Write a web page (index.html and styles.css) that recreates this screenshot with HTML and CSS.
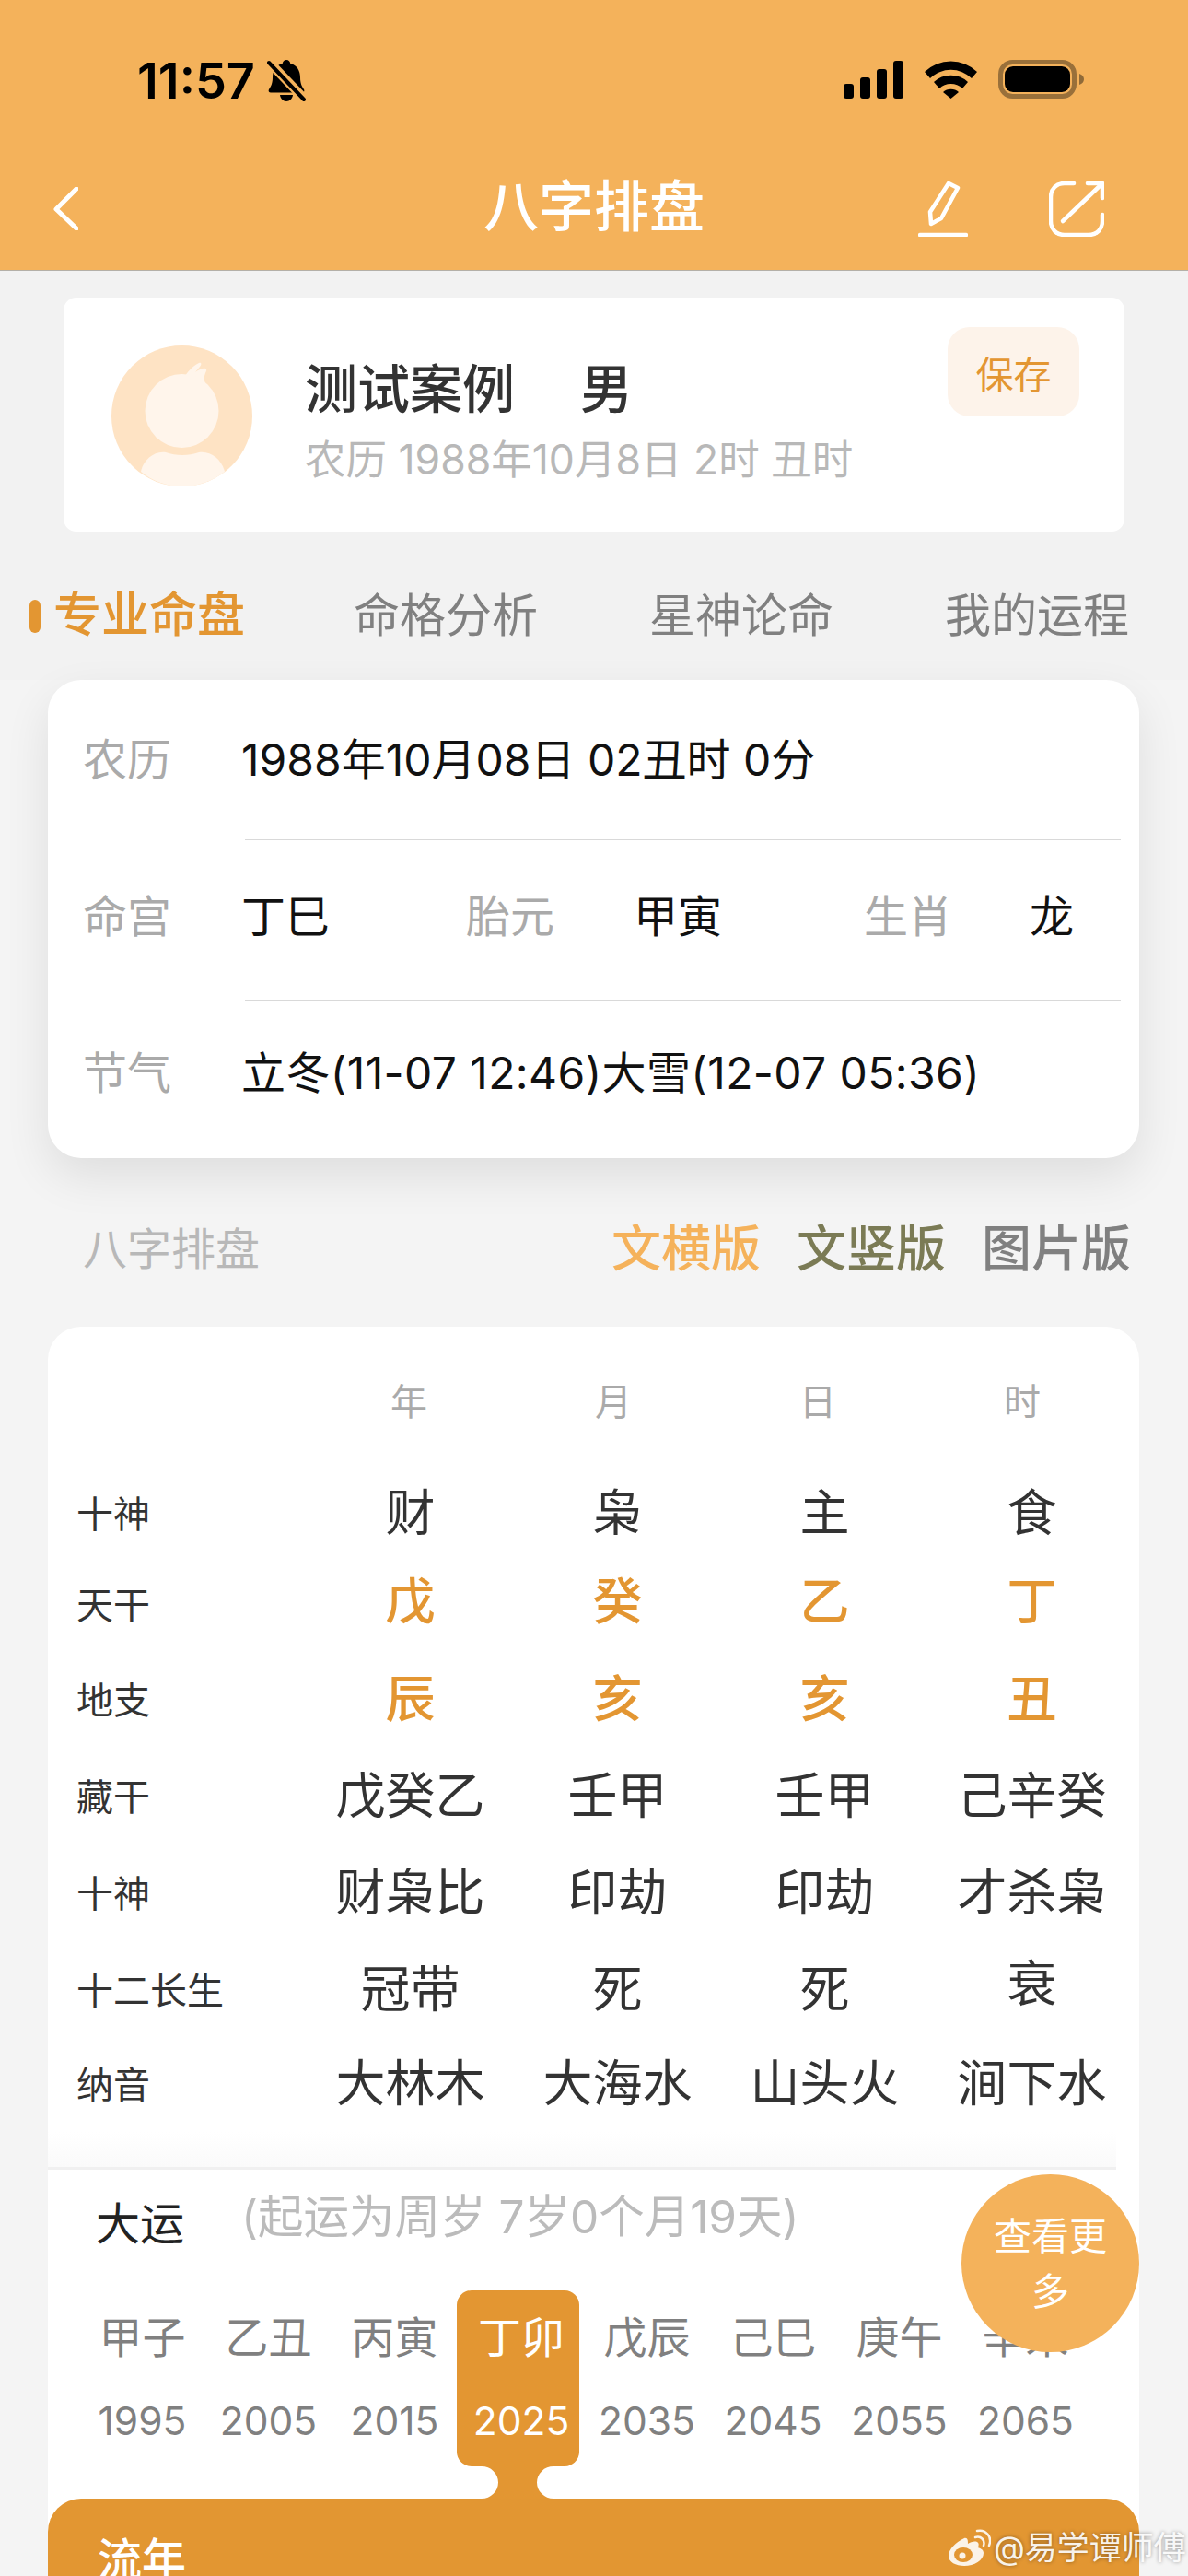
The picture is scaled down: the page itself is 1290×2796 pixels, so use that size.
FILE: index.html
```html
<!DOCTYPE html>
<html lang="zh">
<head>
<meta charset="utf-8">
<title>八字排盘</title>
<link rel="stylesheet" href="styles.css">
</head>
<body>
<div class="page">
  <header class="header">
    <div class="status">
      <div class="status-left">
        <span class="time">11:57</span>
        <svg class="bell" viewBox="0 0 42 45"><path d="M21 0c2.500 0 4 1.700 4.300 4 7 1.700 10.700 7.500 10.700 15 0 6 1.500 9.500 4 13 1 1.700 0 3.500-2 3.500H4c-2 0-3-1.800-2-3.500 2.500-3.500 4-7 4-13 0-7.500 3.500-13.300 10.700-15C17 1.700 18.500 0 21 0z"/><path d="M14 38h14c-.5 4-3.500 7-7 7s-6.500-3-7-7z"/><path class="bell-cut" d="M0 0l42 44"/><path class="bell-line" d="M2 3l38 40"/></svg>
      </div>
      <div class="status-right">
        <svg class="signal" viewBox="0 0 65 41"><rect x="0" y="25" width="11" height="16" rx="3"/><rect x="18" y="18" width="11" height="23" rx="3"/><rect x="36" y="9" width="11" height="32" rx="3"/><rect x="54" y="0" width="11" height="41" rx="3"/></svg>
        <svg class="wifi" viewBox="0 0 57 42"><path d="M0 13A41 41 0 0 1 57 13L51 20A32 32 0 0 0 6 20Z"/><path d="M10 24A27 27 0 0 1 47 24L41 31A18 18 0 0 0 16 31Z"/><path d="M20 35A13 13 0 0 1 37 35L28.500 42Z"/></svg>
        <svg class="battery" viewBox="0 0 93 42"><rect class="batt-shell" x="2.500" y="2.500" width="80" height="37" rx="13"/><rect x="7" y="7" width="71" height="28" rx="9"/><path class="batt-cap" d="M88 15c3 1 5 3 5 6s-2 5-5 6z"/></svg>
      </div>
    </div>
    <div class="nav">
      <svg class="back" viewBox="0 0 27 47"><path d="M25 2L3 24l22 21"/></svg>
      <h1 class="title">八字排盘</h1>
      <svg class="pencil" viewBox="0 0 54 60"><path d="M33 2l10 5-18 33-11 6-1-13z"/><path d="M2 58h50"/></svg>
      <svg class="share" viewBox="0 0 60 60"><path d="M27 2H17C8 2 2 8 2 17v26c0 9 6 15 15 15h26c9 0 15-6 15-15v-7"/><path d="M15 43L56 4"/><path d="M42 2h16v16"/></svg>
    </div>
  </header>

  <section class="top">
    <div class="profile">
      <svg class="avatar" viewBox="0 0 153 153">
        <circle class="av-bg" cx="76.500" cy="76.500" r="76.500"/>
        <path class="av-fg" d="M80 33C84 27 90 21 95 19C98 18 98 21 96 23L91 29C95 26 100 24 102 25C104 26 103 28 102 30C100 34 101 38 102 42Z"/>
        <circle class="av-fg" cx="76.500" cy="71" r="40"/>
        <path class="av-fg" d="M32 137c2-12 14-23 27-21 11 4 25 4 36 0 13-2 25 8 28 21-13 10-29 16-46 16s-33-6-45-16z"/>
      </svg>
      <div class="person">
        <div class="name"><span>测试案例</span><span class="sex">男</span></div>
        <div class="lunar">农历 1988年10月8日 2时 丑时</div>
      </div>
      <button class="save">保存</button>
    </div>
    <nav class="tabs">
      <span class="tab tab-on">专业命盘</span>
      <span class="tab">命格分析</span>
      <span class="tab">星神论命</span>
      <span class="tab">我的运程</span>
    </nav>
  </section>

  <section class="lower">
    <div class="info">
      <div class="info-row r1">
        <span class="info-label">农历</span>
        <span class="info-val">1988年10月08日 02丑时 0分</span>
      </div>
      <div class="info-row r2">
        <span class="info-label">命宫</span>
        <span class="info-val w1">丁巳</span>
        <span class="info-label w2">胎元</span>
        <span class="info-val w3">甲寅</span>
        <span class="info-label w4">生肖</span>
        <span class="info-val">龙</span>
      </div>
      <div class="info-row r3">
        <span class="info-label">节气</span>
        <span class="info-val solar">立冬(11-07 12:46)大雪(12-07 05:36)</span>
      </div>
    </div>

    <div class="section-head">
      <span class="section-title">八字排盘</span>
      <div class="modes">
        <span class="mode m1">文横版</span>
        <span class="mode m2">文竖版</span>
        <span class="mode m3">图片版</span>
      </div>
    </div>

    <div class="chart">
      <div class="pillars">
        <span>年</span><span>月</span><span>日</span><span>时</span>
      </div>
      <div class="grid">
        <span class="lab">十神</span><span>财</span><span>枭</span><span>主</span><span>食</span>
        <span class="lab">天干</span><span class="hi up">戊</span><span class="hi up">癸</span><span class="hi up">乙</span><span class="hi up">丁</span>
        <span class="lab">地支</span><span class="hi">辰</span><span class="hi">亥</span><span class="hi">亥</span><span class="hi">丑</span>
        <span class="lab">藏干</span><span>戊癸乙</span><span>壬甲</span><span>壬甲</span><span>己辛癸</span>
        <span class="lab">十神</span><span>财枭比</span><span>印劫</span><span>印劫</span><span>才杀枭</span>
        <span class="lab">十二长生</span><span>冠带</span><span>死</span><span>死</span><span class="up2">衰</span>
        <span class="lab">纳音</span><span>大林木</span><span>大海水</span><span>山头火</span><span>涧下水</span>
      </div>
      <div class="rule"></div>

      <div class="dayun">
        <div class="dayun-head">
          <span class="dayun-title">大运</span>
          <span class="dayun-note">(起运为周岁 7岁0个月19天)</span>
        </div>
        <div class="dayun-list">
          <div class="yun"><span class="gz">甲子</span><span class="yr">1995</span></div>
          <div class="yun"><span class="gz">乙丑</span><span class="yr">2005</span></div>
          <div class="yun"><span class="gz">丙寅</span><span class="yr">2015</span></div>
          <div class="yun yun-on"><span class="gz">丁卯</span><span class="yr">2025</span>
            <svg class="neck" viewBox="0 0 84 35"><path d="M3 0A18 17.500 0 0 1 21 17.500A18 17.500 0 0 1 3 35H81A18 17.500 0 0 1 63 17.500A18 17.500 0 0 1 81 0Z"/></svg>
          </div>
          <div class="yun"><span class="gz">戊辰</span><span class="yr">2035</span></div>
          <div class="yun"><span class="gz">己巳</span><span class="yr">2045</span></div>
          <div class="yun"><span class="gz">庚午</span><span class="yr">2055</span></div>
          <div class="yun"><span class="gz">辛未</span><span class="yr">2065</span></div>
        </div>
        <button class="more">查看更多</button>
      </div>

      <div class="liunian"><span class="liunian-title">流年</span></div>
    </div>
  </section>

  <div class="mark">
    <svg class="weibo" viewBox="0 0 46 40"><path class="wb-body" d="M17 10C8 14 0 22 0 29c0 7 8 11 17 11 11 0 21-6 21-14 0-4-4-5-6-6 1-3 1-5-1-6-3-1-7 0-10 2 0-3 0-7-4-6z"/><ellipse class="wb-eye" cx="16" cy="28" rx="10" ry="8"/><circle class="wb-pupil" cx="15" cy="29" r="3.500"/><path class="wb-wave" d="M29 9c6-2 11 3 9 9M31 2c9-2 17 6 13 16"/></svg>
    <span class="mark-text">@易学谭师傅</span>
  </div>
</div>
</body>
</html>
```
FILE: styles.css
```css
* { box-sizing: border-box; }
html, body { margin: 0; padding: 0; }
body { font-family: Inter, "Noto Sans CJK SC", sans-serif; background: #f2f2f2; }
.page { position: relative; width: 1290px; height: 2796px; overflow: hidden; background: #f2f2f2; }

.header { height: 294px; background: #f4b25b; border-bottom: 1px solid #b4b0a8; }
.status { height: 176px; padding: 65px 113px 0 149px; display: flex; justify-content: space-between; align-items: flex-start; }
.status-left { display: flex; align-items: center; height: 45px; }
.time { font-size: 54px; font-weight: 600; line-height: 45px; color: #000; }
.bell { width: 42px; height: 45px; margin-left: 13px; fill: #000; }
.bell-cut { fill: none; stroke: #f4b25b; stroke-width: 10; }
.bell-line { fill: none; stroke: #000; stroke-width: 4; stroke-linecap: round; }
.status-right { display: flex; align-items: flex-start; }
.signal { width: 65px; height: 41px; margin-top: 1px; fill: #000; }
.wifi { width: 57px; height: 42px; margin-left: 23px; fill: #000; }
.battery { width: 93px; height: 42px; margin-left: 23px; fill: #000; }
.batt-shell { fill: none; stroke: #99703a; stroke-width: 5; }
.batt-cap { fill: #8f6a38; }

.nav { position: relative; height: 117px; display: flex; align-items: flex-start; padding-left: 58px; }
.back { width: 27px; height: 47px; margin-top: 27px; fill: none; stroke: #fff; stroke-width: 5; stroke-linejoin: round; stroke-linecap: round; }
.title { margin: 12px 0 0 440px; width: 234px; font-size: 60px; line-height: 72px; font-weight: 500; color: #fff; text-align: center; white-space: nowrap; }
.pencil { width: 54px; height: 60px; margin: 21px 0 0 238px; fill: none; stroke: #fff; stroke-width: 4.500; stroke-linejoin: round; stroke-linecap: round; }
.share { width: 60px; height: 60px; margin: 21px 0 0 88px; fill: none; stroke: #fff; stroke-width: 4.500; stroke-linejoin: round; stroke-linecap: round; }

.top { height: 444px; padding: 29px 69px 0; }
.profile { width: 1152px; height: 254px; background: #fff; border-radius: 14px; display: flex; align-items: flex-start; padding: 52px 49px 0 52px; }
.avatar { width: 153px; height: 153px; flex: none; }
.av-bg { fill: #fee3c4; }
.av-fg { fill: #fff5eb; }
.person { margin-left: 57px; flex: 1; padding-top: 13px; }
.name { font-size: 57px; line-height: 70px; font-weight: 500; color: #333; display: flex; }
.sex { margin-left: 71px; }
.lunar { margin-top: 13px; font-size: 44.500px; line-height: 56px; color: #b8b8b8; white-space: nowrap; }
.save { width: 143px; height: 97px; margin-top: -20px; border: 0; border-radius: 24px; background: #fdf3ea; color: #e39632; font: 400 41px Inter, "Noto Sans CJK SC", sans-serif; }

.tabs { display: flex; align-items: center; height: 100px; margin: 41px 0 0 -37px; }
.tab { font-size: 50px; line-height: 64px; color: #808080; margin-left: 121px; white-space: nowrap; }
.tab-on { position: relative; margin-left: 26px; font-size: 52px; font-weight: 500; color: #e39632; }
.tab-on + .tab { margin-left: 118px; }
.tab-on::before { content: ""; position: absolute; left: -26px; top: 15px; width: 12px; height: 36px; border-radius: 6px; background: #e39632; }

.lower { height: 2058px; background: #f4f4f4; padding: 0 53px 0 52px; }
.info { height: 519px; background: #fff; border-radius: 36px; box-shadow: 0 20px 50px rgba(0, 0, 0, .09); padding: 0 20px 0 38px; }
.info-row { display: flex; align-items: center; position: relative; }
.r1 { height: 173px; }
.r2 { height: 174px; padding-bottom: 6px; }
.r3 { height: 172px; padding-bottom: 12px; }
.info-row + .info-row::before { content: ""; position: absolute; left: 176px; right: 0; top: 0; height: 1px; background: #d9d9d9; }
.info-label { width: 172px; flex: none; font-size: 48px; line-height: 60px; color: #aaa; }
.info-val { font-size: 48px; line-height: 60px; color: #111; white-space: nowrap; }
.solar { letter-spacing: .4px; }
.w1 { width: 244px; }
.w2 { width: 182px; }
.w3 { width: 250px; }
.w4 { width: 180px; }

.section-head { height: 183px; display: flex; align-items: center; justify-content: space-between; padding: 14px 9px 0 38px; position: relative; }
.section-title { font-size: 48px; line-height: 60px; color: #b8b8b8; }
.modes { display: flex; gap: 39px; }
.mode { font-size: 54px; line-height: 64px; font-weight: 500; white-space: nowrap; }
.m1 { color: #f5b25b; }
.m2 { color: #7b7b55; }
.m3 { color: #808080; }

.chart { background: #fff; border-radius: 36px 36px 0 0; }
.pillars { height: 112px; padding: 52px 0 0 281px; display: grid; grid-template-columns: repeat(4, 222px); font-size: 40px; line-height: 60px; color: #aaa; text-align: center; }
.grid { margin-top: 40px; padding-left: 31px; display: grid; grid-template-columns: 250px repeat(4, 225px); grid-template-rows: 102px 96px 110px 100px 110px 100px 104px; align-items: center; font-size: 54px; line-height: 64px; color: #333; text-align: center; }
.lab { font-size: 40px; color: #333; text-align: left; padding-top: 2px; }
.hi { color: #e39632; font-weight: 500; }
.up { padding-bottom: 6px; }
.up2 { padding-bottom: 12px; }
.rule { height: 41px; margin-right: 25px; border-bottom: 3px solid #f0f0f0; background: linear-gradient(#fff, #fafafa); }

.dayun { position: relative; height: 357px; }
.dayun-head { display: flex; align-items: flex-start; height: 131px; padding: 21px 0 0 52px; }
.dayun-title { font-size: 48px; line-height: 60px; padding-top: 8px; color: #222; font-weight: 400; }
.dayun-note { margin-left: 62px; font-size: 49.500px; line-height: 60px; color: #bbb; white-space: nowrap; }
.dayun-list { display: flex; padding-left: 34px; }
.yun { width: 137px; flex: none; display: flex; flex-direction: column; align-items: center; padding-top: 21px; position: relative; }
.gz { font-size: 47px; line-height: 60px; color: #808080; white-space: nowrap; }
.yr { margin-top: 31px; font-size: 42.500px; line-height: 60px; color: #808080; }
.yun-on { width: 133px; height: 191px; margin: 0 5px 0 -1px; padding-left: 7px; background: #e39632; border-radius: 16px; }
.yun-on .gz, .yun-on .yr { color: #fff; }
.neck { position: absolute; left: 24px; top: 100%; width: 84px; height: 35px; fill: #e39632; }
.more { position: absolute; right: 0; top: 5px; width: 193px; height: 193px; padding: 0 30px; border: 0; border-radius: 50%; background: #f4b25b; color: #fff; font: 400 41px/60px Inter, "Noto Sans CJK SC", sans-serif; }

.liunian { height: 84px; background: #e29632; border-radius: 36px 36px 0 0; padding: 36px 0 0 54px; }
.liunian-title { display: block; font-size: 48px; line-height: 60px; color: #fff; font-weight: 500; }

.mark { position: absolute; left: 1030px; top: 2743px; display: flex; align-items: center; gap: 3px; }
.weibo { width: 46px; height: 40px; }
.wb-body { fill: #fbf3e8; }
.wb-eye { fill: #e29632; }
.wb-pupil { fill: #fbf3e8; }
.wb-wave { fill: none; stroke: #fbf3e8; stroke-width: 2.500; stroke-linecap: round; }
.mark-text { font-size: 35px; line-height: 44px; color: rgba(255, 255, 255, .92); text-shadow: 0 0 4px rgba(0, 0, 0, .4); white-space: nowrap; }
```
